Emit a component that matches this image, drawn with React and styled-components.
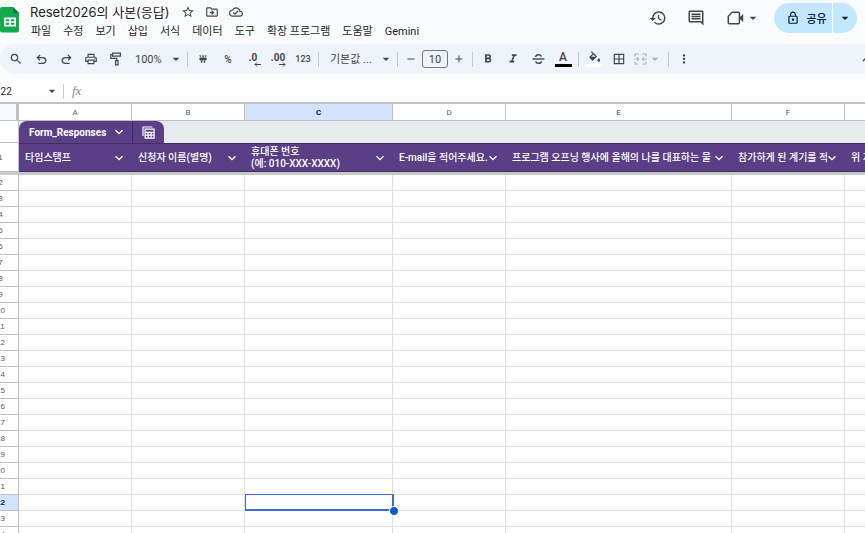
import React from 'react';
import styled, { createGlobalStyle, css } from 'styled-components';
import {
  MdAdd,
  MdArrowDropDown,
  MdBorderAll,
  MdFormatBold,
  MdFormatItalic,
  MdHistory,
  MdLockOutline,
  MdMoreVert,
  MdOutlineCloudDone,
  MdOutlineComment,
  MdOutlineDriveFileMove,
  MdOutlinePrint,
  MdRemove,
  MdSearch,
  MdStarBorder
} from 'react-icons/md';

const GlobalStyle = createGlobalStyle`
  * {
    box-sizing: border-box;
  }

  body {
    margin: 0;
    background: #f9fbfd;
    color: #444746;
    font-family: Roboto, 'Noto Sans CJK KR', sans-serif;
  }

  button,
  input,
  select {
    margin: 0;
    padding: 0;
    border: 0;
    background: none;
    color: inherit;
    font: inherit;
  }
`;

const Page = styled.div`
  display: flex;
  flex-direction: column;
  height: 100vh;
  overflow: hidden;
`;

const Header = styled.header`
  display: flex;
  align-items: flex-start;
  height: 44px;
  padding-right: 8px;
`;

const Logo = styled.svg`
  flex: none;
  width: 20px;
  height: 26px;
  margin-top: 7px;
`;

const TitleBlock = styled.div`
  flex: 1;
  min-width: 0;
  padding-left: 5px;
`;

const TitleRow = styled.div`
  display: flex;
  align-items: center;
  height: 24px;
  padding-left: 5px;
`;

const Title = styled.h1`
  margin: 0 6px 0 0;
  color: #1f1f1f;
  font-family: Inter, 'Noto Sans CJK KR', sans-serif;
  font-size: 13px;
  font-weight: 400;
  line-height: 24px;
  white-space: nowrap;
`;

const Menu = styled.nav`
  display: flex;
  height: 15px;
`;

const MenuButton = styled.button`
  padding: 0 6px;
  color: #1f1f1f;
  font-size: 11px;
  line-height: 15px;
  white-space: nowrap;
`;

const IconButton = styled.button`
  display: flex;
  flex: none;
  align-items: center;
  justify-content: center;
  width: ${props => props.$width || 24}px;
  height: 24px;
  color: ${props => (props.$muted ? '#b0b3b8' : '#444746')};
  font-size: ${props => props.$size || 14}px;
`;

const HeaderActions = styled.div`
  display: flex;
  align-items: center;
  height: 35px;
`;

const Share = styled.div`
  display: flex;
  height: 30px;
  margin-left: 2px;
  overflow: hidden;
  border-radius: 15px;
  color: #001d35;
`;

const ShareButton = styled.button`
  display: flex;
  align-items: center;
  justify-content: center;
  gap: 6px;
  width: 58px;
  padding-left: 7px;
  background: #c2e7ff;
  font-size: 11px;
  font-weight: 500;
`;

const ShareMore = styled.button`
  display: flex;
  align-items: center;
  justify-content: center;
  width: 24px;
  margin-left: 1px;
  background: #c2e7ff;
  font-size: 16px;
`;

const Toolbar = styled.div`
  display: flex;
  flex: none;
  align-items: center;
  gap: 1px;
  height: 30px;
  margin-bottom: 6px;
  padding-left: 4px;
  border-radius: 15px 0 0 15px;
  background: #eff3fa;
`;

const Separator = styled.span`
  width: 1px;
  height: 15px;
  margin: 0 2px;
  background: #c7c7c7;
`;

const TextButton = styled(IconButton)`
  font-size: ${props => props.$size || 10}px;
  font-weight: ${props => props.$weight || 500};
`;

const Picker = styled.label`
  display: grid;
  align-items: center;
  width: ${props => props.$width}px;
  font-size: 11px;

  select {
    grid-area: 1 / 1;
    width: 100%;
    height: 24px;
    padding-left: ${props => props.$indent}px;
    appearance: none;
    outline: none;
  }

  svg {
    grid-area: 1 / 1;
    justify-self: end;
    font-size: 16px;
    pointer-events: none;
  }
`;

const SizeInput = styled.input`
  width: 26px;
  height: 18px;
  border: 1px solid #747775;
  border-radius: 3px;
  font-size: 11px;
  text-align: center;
`;

const ColorButton = styled(IconButton)`
  flex-direction: column;
  gap: 1px;

  &::after {
    content: '';
    width: 17px;
    height: 3px;
    background: ${props => props.$color};
  }
`;

const Letter = styled.span`
  font-size: 12px;
  font-weight: 500;
  line-height: 12px;
`;

const DecimalButton = styled.button`
  display: flex;
  flex-direction: column;
  align-items: center;
  width: 24px;
  padding-top: 2px;
  color: #444746;
  font-size: 10px;
  font-weight: 700;
  line-height: 9px;

  svg {
    width: 7px;
    height: 5px;
    margin-left: 8px;
  }
`;

const ToolbarEnd = styled.div`
  display: flex;
  flex: 1;
  justify-content: flex-end;
  overflow: hidden;

  svg {
    flex: none;
    width: 8px;
    height: 8px;
    margin-right: -5px;
  }
`;

const FormulaBar = styled.div`
  display: flex;
  flex: none;
  align-items: center;
  gap: 1px;
  height: 22px;
  background: #fff;
`;

const NameBox = styled.input`
  width: 49px;
  margin-left: -6px;
  color: #1f1f1f;
  font-size: 10px;
  outline: none;
`;

const Fx = styled.span`
  padding: 0 5px;
  color: #8a8d91;
  font-family: 'Liberation Serif', serif;
  font-size: 13px;
  font-style: italic;
`;

const FormulaInput = styled.input`
  flex: 1;
  min-width: 0;
  outline: none;
`;

const Sheet = styled.main`
  flex: 1;
  min-height: 0;
  overflow: hidden;
  border-top: 2px solid #bdc1c2;
  background: #fff;
`;

const Grid = styled.table`
  width: 975px;
  margin-left: -17px;
  border-spacing: 0;
  table-layout: fixed;
`;

const headStyle = css`
  padding: 0;
  border-right: 1px solid #c0c0c0;
  border-bottom: 1px solid #c0c0c0;
  background: ${props => (props.$active ? '#d3e3fd' : '#fff')};
  color: ${props => (props.$active ? '#041e49' : '#575b5f')};
  font-size: 8px;
  font-weight: ${props => (props.$active ? 700 : 400)};
  text-align: center;
`;

const ColumnHead = styled.th`
  ${headStyle}
  height: 17px;
`;

const Corner = styled.td`
  padding: 0;
  border-right: 3px solid #c0c0c0;
  border-bottom: 1px solid #c0c0c0;
  background: #f8f9fa;
`;

const RowHead = styled.th`
  ${headStyle}
  font-family: 'Liberation Sans', sans-serif;
`;

const Cell = styled.td`
  position: ${props => (props.$selected ? 'relative' : 'static')};
  height: 16px;
  padding: 0;
  border-right: 1px solid #e1e1e1;
  border-bottom: 1px solid #e1e1e1;
`;

const TabCell = styled.td`
  height: 22px;
  padding: 0;
  background: #e8eaed;
`;

const Tabs = styled.div`
  display: flex;
  width: 145px;
  height: 22px;
  overflow: hidden;
  border-radius: 8px 8px 0 0;
  background: #5b3f86;
  color: #fff;
`;

const TableName = styled.button`
  display: flex;
  flex: 1;
  align-items: center;
  justify-content: space-between;
  padding: 0 8px 0 10px;
  border-right: 1px solid #412c63;
  font-size: 10px;
  font-weight: 700;
`;

const TableView = styled.button`
  display: flex;
  align-items: center;
  justify-content: center;
  width: 31px;
`;

const FieldHead = styled.th`
  height: 29px;
  padding: 0 8px 0 6px;
  border-top: 1px solid #412c63;
  border-bottom: 1px solid #412c63;
  background: #5b3f86;
  color: #fff;
  font-size: 10px;
  font-weight: 500;
  line-height: 12px;
  text-align: left;
`;

const Field = styled.div`
  display: flex;
  align-items: center;

  svg {
    flex: none;
  }
`;

const FieldName = styled.span`
  flex: 1;
  min-width: 0;
  overflow: hidden;
  white-space: pre;
`;

const FreezeBar = styled.td`
  height: 3px;
  padding: 0;
  background: #c8c8c8;
`;

const Selection = styled.div`
  position: absolute;
  top: -1px;
  right: -2px;
  bottom: -1px;
  left: 0;
  border: 1px solid #3c6bd6;
  border-width: 1px 2px 2px 1px;

  &::after {
    content: '';
    position: absolute;
    right: -7px;
    bottom: -7px;
    width: 8px;
    height: 8px;
    border: 1px solid #fff;
    border-radius: 50%;
    background: #0b57d0;
  }
`;

const MENU = [
  '파일',
  '수정',
  '보기',
  '삽입',
  '서식',
  '데이터',
  '도구',
  '확장 프로그램',
  '도움말',
  'Gemini'
];

const COLUMNS = [
  { id: 'A', width: 113, name: '타임스탬프' },
  { id: 'B', width: 113, name: '신청자 이름(별명)' },
  { id: 'C', width: 148, name: '휴대폰 번호\n(예: 010-XXX-XXXX)' },
  { id: 'D', width: 113, name: 'E-mail을 적어주세요.' },
  { id: 'E', width: 226, name: '프로그램 오프닝 행사에 올해의 나를 대표하는 물' },
  { id: 'F', width: 113, name: '참가하게 된 계기를 적' },
  { id: 'G', width: 113, name: '위 지' }
];

const ROWS = Array.from({ length: 23 }, (_, i) => i + 2);

const ACTIVE = { column: 'C', row: 22 };

const SheetsLogo = () => (
  <Logo viewBox="0 0 20 26" aria-hidden="true">
    <path d="M2 0h11l6 6v17.500a2 2 0 0 1-2 2H2a2 2 0 0 1-2-2V2a2 2 0 0 1 2-2z" fill="#11a94d" />
    <path d="M13 0l6 6h-6z" fill="#087c38" />
    <path
      d="M4 10.500h12v9H4zM5.700 12.200v2h3.500v-2zM10.800 12.200v2h3.500v-2zM5.700 15.800v2h3.500v-2zM10.800 15.800v2h3.500v-2z"
      fill="#fff"
      fillRule="evenodd"
    />
  </Logo>
);

const UndoIcon = () => (
  <svg width="15" height="15" viewBox="0 -960 960 960" fill="currentColor">
    <path d="M280-200v-80h284q63 0 109.500-40T720-420q0-60-46.500-100T564-560H312l104 104-56 56-200-200 200-200 56 56-104 104h252q97 0 169.500 63T800-420q0 94-72.500 157T564-200H280Z" />
  </svg>
);

const RedoIcon = () => (
  <svg width="15" height="15" viewBox="0 -960 960 960" fill="currentColor">
    <path d="M396-200q-97 0-169.500-63T154-420q0-94 72.500-157T396-640h252L544-744l56-56 200 200-200 200-56-56 104-104H396q-63 0-109.500 40T240-420q0 60 46.500 100T396-280h284v80H396Z" />
  </svg>
);

const RollerIcon = () => (
  <svg width="12" height="14" viewBox="0 0 12 14" fill="none" stroke="currentColor" strokeWidth="1.200">
    <path d="M2.600 1.100h7.800v3H2.600zM2.600 2.600H.8v3.800h6v2.200" />
    <path d="M5.600 8.600h2.400v4.300H5.600z" />
  </svg>
);

const MeetIcon = () => (
  <svg width="18" height="16" viewBox="0 0 18 16" fill="none" stroke="currentColor" strokeWidth="1.500">
    <path d="M5.200 2.300h6.200a1 1 0 0 1 1 1v9.400a1 1 0 0 1-1 1H2.300a1 1 0 0 1-1-1V6.200z" strokeLinejoin="round" />
    <path d="M13 7l3.200-3v8L13 9z" fill="currentColor" stroke="none" />
  </svg>
);

const StrikeIcon = () => (
  <svg width="13" height="12" viewBox="0 0 13 12" fill="none" stroke="currentColor" strokeWidth="1.400">
    <path d="M.5 6h12" />
    <path d="M9.300 3.600C9 2.300 8 1.700 6.500 1.700c-1.700 0-2.800.8-2.800 2.200M3.600 8.300c.3 1.300 1.300 2 2.900 2 1.700 0 2.900-.7 2.900-2.100" />
  </svg>
);

const FillIcon = () => (
  <svg width="13" height="12" viewBox="0 0 13 12">
    <path d="M2.300.6l4.900 4.900-3.700 3.600L.9 6.300l3.300-3.500" fill="none" stroke="currentColor" strokeWidth="1.200" transform="translate(1 0)" />
    <path d="M1.900 5.800h6l-3.400 3.400z" fill="currentColor" />
    <path d="M10.800 7c.8 1.100 1.300 1.700 1.300 2.400a1.300 1.300 0 0 1-2.600 0c0-.7.5-1.300 1.300-2.400z" fill="currentColor" />
  </svg>
);

const MergeIcon = () => (
  <svg width="13" height="12" viewBox="0 0 13 12" fill="none" stroke="currentColor" strokeWidth="1.200">
    <path d="M4.500 1H1v2.500M8.500 1H12v2.500M4.500 11H1V8.500M8.500 11H12V8.500M0 6h4.500M13 6H8.500" />
    <path d="M3 4.300L4.800 6 3 7.700M10 4.300L8.200 6 10 7.700" />
  </svg>
);

const ChevronIcon = () => (
  <svg width="10" height="8" viewBox="0 0 10 8" fill="none" stroke="currentColor" strokeWidth="1.300">
    <path d="M1.500 2.200L5 5.700l3.500-3.500" />
  </svg>
);

const TableIcon = () => (
  <svg width="13" height="13" viewBox="0 0 13 13" fill="none" stroke="currentColor" strokeWidth="1.200">
    <path d="M1 10V1h9.500" />
    <path d="M3.100 3.100h9v9h-9z" />
    <path d="M3.100 6.300h9M3.100 9.200h9M6.100 6.300v6M9.100 6.300v6" />
  </svg>
);

const ArrowIcon = ({ flip }) => (
  <svg viewBox="0 0 7 5" fill="none" stroke="currentColor">
    <path d={flip ? 'M0 2.500h6M4 .5l2 2-2 2' : 'M7 2.500H1M3 .5l-2 2 2 2'} />
  </svg>
);

const TopBar = () => (
  <Header>
    <SheetsLogo />
    <TitleBlock>
      <TitleRow>
        <Title>Reset2026의 사본(응답)</Title>
        <IconButton aria-label="별표"><MdStarBorder /></IconButton>
        <IconButton aria-label="이동"><MdOutlineDriveFileMove /></IconButton>
        <IconButton aria-label="문서 상태"><MdOutlineCloudDone /></IconButton>
      </TitleRow>
      <Menu>
        {MENU.map(item => (
          <MenuButton key={item}>{item}</MenuButton>
        ))}
      </Menu>
    </TitleBlock>
    <HeaderActions>
      <IconButton $width={38} $size={18} aria-label="버전 기록"><MdHistory /></IconButton>
      <IconButton $width={38} $size={18} aria-label="댓글"><MdOutlineComment /></IconButton>
      <IconButton $width={57} $size={16} aria-label="화상 회의">
        <MeetIcon />
        <MdArrowDropDown />
      </IconButton>
      <Share>
        <ShareButton>
          <MdLockOutline size={14} />
          공유
        </ShareButton>
        <ShareMore aria-label="공유 옵션"><MdArrowDropDown /></ShareMore>
      </Share>
    </HeaderActions>
  </Header>
);

const Tools = () => (
  <Toolbar role="toolbar">
    <IconButton aria-label="검색"><MdSearch /></IconButton>
    <IconButton aria-label="실행취소"><UndoIcon /></IconButton>
    <IconButton aria-label="재실행"><RedoIcon /></IconButton>
    <IconButton aria-label="인쇄"><MdOutlinePrint /></IconButton>
    <IconButton aria-label="서식 복사"><RollerIcon /></IconButton>
    <Picker $width={55} $indent={6}>
      <select aria-label="확대/축소" defaultValue="100%">
        <option>100%</option>
      </select>
      <MdArrowDropDown />
    </Picker>
    <Separator />
    <TextButton $weight={400} aria-label="통화 형식">₩</TextButton>
    <TextButton aria-label="퍼센트 형식">%</TextButton>
    <DecimalButton aria-label="소수점 이하 자릿수 감소">
      .0
      <ArrowIcon />
    </DecimalButton>
    <DecimalButton aria-label="소수점 이하 자릿수 증가">
      .00
      <ArrowIcon flip />
    </DecimalButton>
    <TextButton $size={9} aria-label="서식 더보기">123</TextButton>
    <Separator />
    <Picker $width={72} $indent={8}>
      <select aria-label="글꼴" defaultValue="기본값 ...">
        <option>기본값 ...</option>
      </select>
      <MdArrowDropDown />
    </Picker>
    <Separator />
    <IconButton $width={20} $size={12} aria-label="글꼴 크기 줄이기"><MdRemove /></IconButton>
    <SizeInput aria-label="글꼴 크기" defaultValue="10" />
    <IconButton $width={20} $size={12} aria-label="글꼴 크기 늘리기"><MdAdd /></IconButton>
    <Separator />
    <IconButton aria-label="굵게"><MdFormatBold /></IconButton>
    <IconButton aria-label="기울임꼴"><MdFormatItalic /></IconButton>
    <IconButton aria-label="취소선"><StrikeIcon /></IconButton>
    <ColorButton $color="#000" aria-label="텍스트 색상"><Letter>A</Letter></ColorButton>
    <Separator />
    <ColorButton $color="#fff" aria-label="채우기 색상"><FillIcon /></ColorButton>
    <IconButton aria-label="테두리"><MdBorderAll /></IconButton>
    <IconButton $width={33} $muted aria-label="셀 병합">
      <MergeIcon />
      <MdArrowDropDown size={16} />
    </IconButton>
    <Separator />
    <IconButton aria-label="더보기"><MdMoreVert /></IconButton>
    <ToolbarEnd>
      <svg viewBox="0 0 8 8" fill="none" stroke="currentColor" strokeWidth="1.300">
        <path d="M1 6l3-3 3 3" />
      </svg>
    </ToolbarEnd>
  </Toolbar>
);

const Spreadsheet = () => (
  <Sheet>
    <Grid>
      <colgroup>
        <col width="36" />
        {COLUMNS.map(column => (
          <col key={column.id} width={column.width} />
        ))}
      </colgroup>
      <thead>
        <tr>
          <Corner />
          {COLUMNS.map(({ id }) => (
            <ColumnHead key={id} scope="col" $active={id === ACTIVE.column}>
              {id}
            </ColumnHead>
          ))}
        </tr>
        <tr>
          <RowHead />
          <TabCell colSpan={COLUMNS.length}>
            <Tabs>
              <TableName>
                Form_Responses
                <ChevronIcon />
              </TableName>
              <TableView aria-label="표 보기"><TableIcon /></TableView>
            </Tabs>
          </TabCell>
        </tr>
        <tr>
          <RowHead scope="row">1</RowHead>
          {COLUMNS.map(({ id, name }) => (
            <FieldHead key={id} scope="col">
              <Field>
                <FieldName>{name}</FieldName>
                <ChevronIcon />
              </Field>
            </FieldHead>
          ))}
        </tr>
        <tr>
          <FreezeBar colSpan={COLUMNS.length + 1} />
        </tr>
      </thead>
      <tbody>
        {ROWS.map(row => (
          <tr key={row}>
            <RowHead scope="row" $active={row === ACTIVE.row}>{row}</RowHead>
            {COLUMNS.map(({ id }) => {
              const selected = id === ACTIVE.column && row === ACTIVE.row;
              return (
                <Cell key={id} $selected={selected}>
                  {selected && <Selection />}
                </Cell>
              );
            })}
          </tr>
        ))}
      </tbody>
    </Grid>
  </Sheet>
);

const App = () => (
  <>
    <GlobalStyle />
    <Page>
      <TopBar />
      <Tools />
      <FormulaBar>
        <NameBox aria-label="이름 상자" defaultValue="C22" />
        <MdArrowDropDown size={16} />
        <Separator />
        <Fx>fx</Fx>
        <FormulaInput aria-label="수식 입력줄" />
      </FormulaBar>
      <Spreadsheet />
    </Page>
  </>
);

export default App;
